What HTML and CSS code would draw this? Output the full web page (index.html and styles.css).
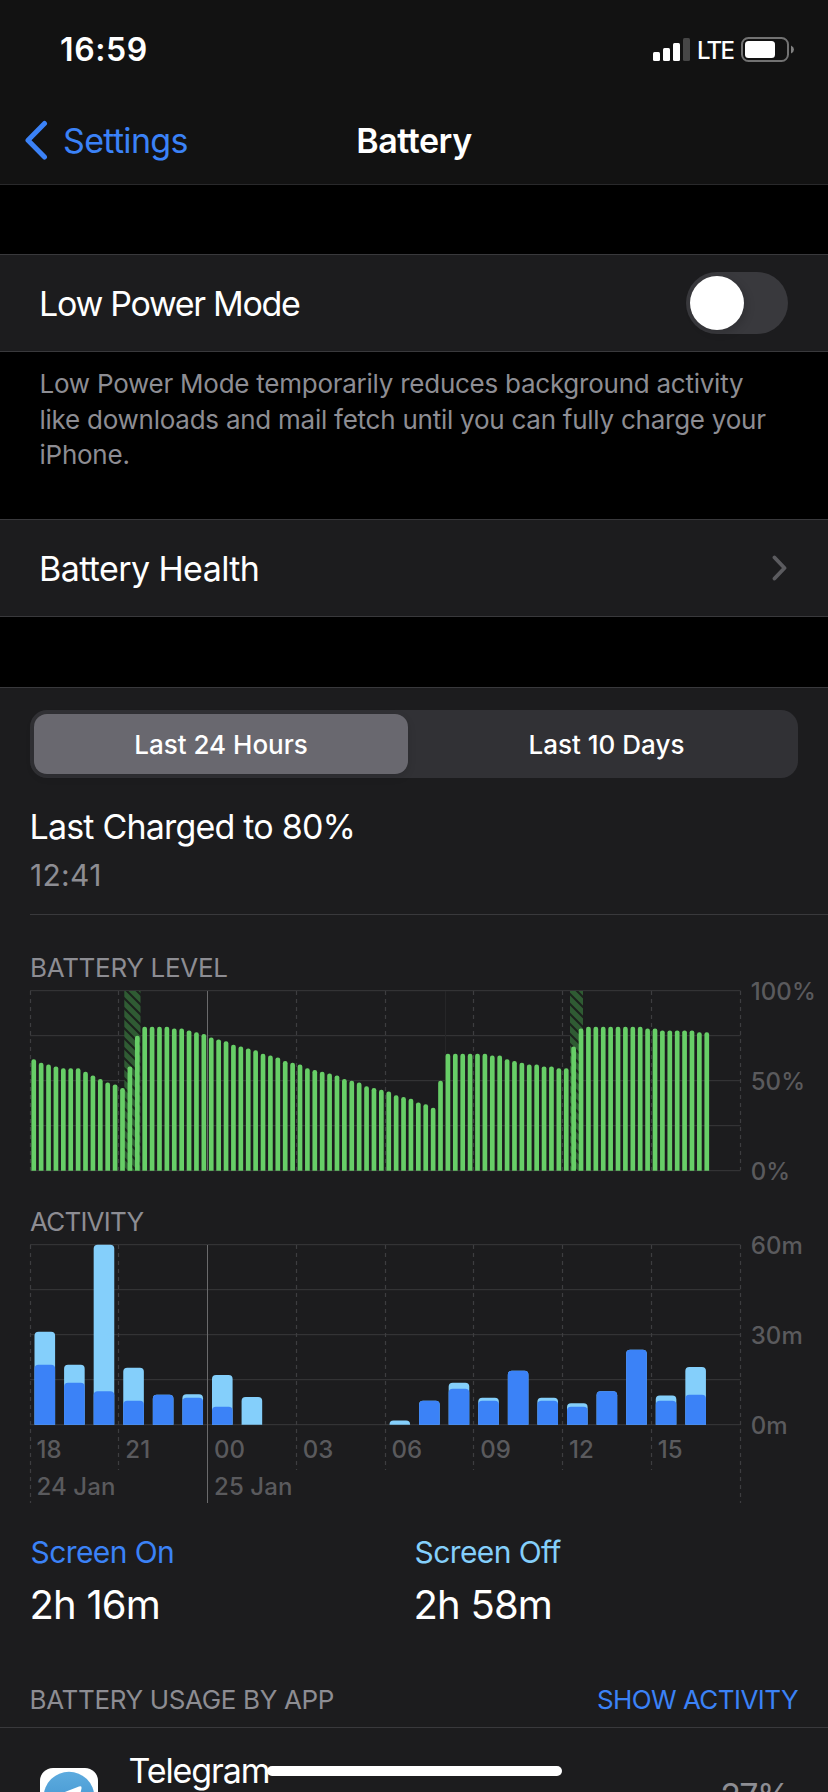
FILE: index.html
```html
<!DOCTYPE html>
<html lang="en">
<head>
    <meta charset="UTF-8">
    <meta name="viewport" content="width=device-width, initial-scale=1.0">
    <title>Battery</title>
    <link rel="stylesheet" href="styles.css">
</head>
<body>

<header class="header">
    <div class="status-bar">
        <span class="time">16:59</span>
        <div class="status-icons">
            <svg class="signal" width="37" height="24" viewBox="0 0 37 24">
                <rect x="0" y="14" width="7" height="9" rx="1.5" fill="#fff"/>
                <rect x="10" y="10" width="7" height="13" rx="1.5" fill="#fff"/>
                <rect x="20" y="5" width="7" height="18" rx="1.5" fill="#fff"/>
                <rect x="30" y="0" width="7" height="23" rx="1.5" fill="#464646"/>
            </svg>
            <span class="network">LTE</span>
            <svg class="battery-icon" width="53" height="25" viewBox="0 0 53 25">
                <rect x="1" y="1" width="46" height="23" rx="6.5" fill="none" stroke="#727272" stroke-width="2"/>
                <rect x="4" y="4" width="30" height="17" rx="3.5" fill="#fff"/>
                <path d="M50 8.5 Q53 10 53 12.5 Q53 15 50 16.5 Z" fill="#808080"/>
            </svg>
        </div>
    </div>
    <nav class="nav-bar">
        <a class="back">
            <svg width="24" height="40" viewBox="0 0 24 40">
                <path d="M20.5 3.5 L4 20.2 L20.5 37" fill="none" stroke="#3b82f7" stroke-width="5" stroke-linecap="round" stroke-linejoin="round"/>
            </svg>
            <span>Settings</span>
        </a>
        <h1>Battery</h1>
    </nav>
</header>

<main>
    <div class="row">
        <span class="row-label low-power">Low Power Mode</span>
        <div class="toggle"><div class="knob"></div></div>
    </div>
    <p class="footnote">Low Power Mode temporarily reduces background activity<br>like downloads and mail fetch until you can fully charge your<br>iPhone.</p>

    <div class="row">
        <span class="row-label">Battery Health</span>
        <svg class="chevron" width="16" height="28" viewBox="0 0 16 28">
            <path d="M2.5 3.5 L12.5 14 L2.5 24.5" fill="none" stroke="#5b5b5f" stroke-width="3.8" stroke-linecap="round" stroke-linejoin="round"/>
        </svg>
    </div>

    <section class="usage">
        <div class="segmented">
            <button class="segment active">Last 24 Hours</button>
            <button class="segment">Last 10 Days</button>
        </div>

        <div class="last-charged">
            <h2>Last Charged to 80%</h2>
            <p>12:41</p>
        </div>

        <h3 class="chart-title">BATTERY LEVEL</h3>
        <svg class="chart" id="levelChart" width="798" height="200" viewBox="0 0 798 200">
            <defs>
                <pattern id="hatch" width="10" height="10" patternUnits="userSpaceOnUse">
                    <rect width="10" height="10" fill="#2f5b33"/>
                    <path d="M-2 -2 L12 12 M-2 8 L2 12 M8 -2 L12 2" stroke="#1b221c" stroke-width="2.1"/>
                </pattern>
            </defs>
        </svg>

        <h3 class="chart-title activity-title">ACTIVITY</h3>
        <svg class="chart" id="activityChart" width="798" height="266" viewBox="0 0 798 266"></svg>

        <div class="totals">
            <div class="total">
                <h4 class="screen-on">Screen On</h4>
                <p>2h 16m</p>
            </div>
            <div class="total">
                <h4 class="screen-off">Screen Off</h4>
                <p>2h 58m</p>
            </div>
        </div>

        <div class="apps-header">
            <span class="apps-title">BATTERY USAGE BY APP</span>
            <a class="show-activity">SHOW ACTIVITY</a>
        </div>

        <div class="app">
            <svg class="app-icon" width="58" height="58" viewBox="0 0 58 58">
                <defs>
                    <linearGradient id="sky" x1="0" y1="0" x2="0" y2="1">
                        <stop offset="0" stop-color="#5dabdf"/>
                        <stop offset="1" stop-color="#3a8fcb"/>
                    </linearGradient>
                </defs>
                <rect width="58" height="58" rx="13" fill="#fff"/>
                <circle cx="29" cy="29" r="25.3" fill="url(#sky)"/>
                <path d="M12 29 L39 18.5 Q42 17.5 41.5 20.5 L37 41 L24 32 Z" fill="#fff"/>
            </svg>
            <span class="app-name">Telegram</span>
            <span class="app-percent">27%</span>
        </div>
    </section>
</main>

<div class="home-indicator"></div>

<script>
    const SVG_NS = 'http://www.w3.org/2000/svg';
    const PLOT_WIDTH = 710;
    const PLOT_HEIGHT = 180;

    // battery percentage, one value per quarter of an hour
    const levels = [
        62, 60, 59, 58, 57, 57, 57, 55, 53, 51, 49, 48,
        46, 58, 75, 80, 80, 80, 80, 79, 79, 78, 77, 76,
        74, 73, 72, 70, 69, 68, 67, 65, 64, 63, 61, 60,
        59, 57, 56, 55, 54, 53, 51, 50, 49, 47, 46, 45,
        44, 42, 41, 40, 38, 37, 35, 50, 65, 65, 65, 65,
        65, 65, 64, 64, 62, 61, 60, 59, 59, 58, 58, 57,
        57, 69, 79, 80, 80, 80, 80, 80, 80, 80, 80, 79,
        79, 78, 78, 78, 78, 78, 77, 77
    ];

    // minutes per hour: [total, screen on]
    const activity = [
        [31, 20], [20, 14], [60, 11.2], [19, 8], [10, 10], [10.2, 9],
        [16.6, 6], [9.3, 0], [0, 0], [0, 0], [0, 0], [0, 0],
        [1.4, 0], [8, 8], [14, 12], [9, 8], [18, 18], [9, 8],
        [7.2, 6], [11.2, 11.2], [25, 25], [9.8, 8], [19.3, 10]
    ];

    const hours = ['18', '21', '00', '03', '06', '09', '12', '15'];

    function add(svg, tag, attrs, text) {
        const el = document.createElementNS(SVG_NS, tag);
        for (const key in attrs) el.setAttribute(key, attrs[key]);
        if (text) el.textContent = text;
        svg.appendChild(el);
    }

    function drawGrid(svg, top, labels, bottomOf) {
        for (let i = 0; i <= 4; i++) {
            add(svg, 'rect', { class: 'grid', x: 0, y: top + i * 45, width: PLOT_WIDTH + 0.5, height: 1.2 });
        }
        for (let i = 0; i <= 8; i++) {
            const x = Math.round(i * PLOT_WIDTH / 8 - 0.4) + 0.5;
            add(svg, 'line', { class: i === 2 ? 'midnight' : 'tick', x1: x, x2: x, y1: top + 1, y2: bottomOf(i) });
        }
        labels.forEach((label, i) => {
            add(svg, 'text', { class: 'axis', x: 720.7, y: top + 9.5 + i * 90 }, label);
        });
    }

    // bar with only the two top corners rounded
    function drawBar(svg, className, x, width, base, height, radius) {
        if (height <= 0) return;
        const r = Math.min(radius, height);
        const y = base - height;
        add(svg, 'path', {
            class: className,
            d: `M${x} ${base} V${y + r} Q${x} ${y} ${x + r} ${y} H${x + width - r} Q${x + width} ${y} ${x + width} ${y + r} V${base} Z`
        });
    }

    const levelChart = document.getElementById('levelChart');
    drawGrid(levelChart, 6, ['100%', '50%', '0%'], () => 186);
    add(levelChart, 'rect', { class: 'charging', x: 94.3, y: 7, width: 16.2, height: PLOT_HEIGHT });
    add(levelChart, 'rect', { class: 'charging', x: 540, y: 7, width: 13, height: PLOT_HEIGHT });
    add(levelChart, 'line', { class: 'faint', x1: 415.5, x2: 415.5, y1: 7, y2: 186 });
    levels.forEach((value, i) => {
        drawBar(levelChart, 'level', 1.4 + i * PLOT_WIDTH / 96, 4.7, 186.8, value * 1.8, 2.2);
    });

    const activityChart = document.getElementById('activityChart');
    drawGrid(activityChart, 6, ['60m', '30m', '0m'], i => (i === 0 || i === 2 || i === 8) ? 265 : 232);
    activity.forEach(([total, on], i) => {
        const x = 4.5 + i * PLOT_WIDTH / 24;
        drawBar(activityChart, 'off', x, 20.6, 186.8, total * 3, 4);
        drawBar(activityChart, 'on', x, 20.6, 186.8, on * 3, 4);
    });
    hours.forEach((hour, i) => {
        add(activityChart, 'text', { class: 'axis', x: 6.5 + i * PLOT_WIDTH / 8, y: 220 }, hour);
    });
    add(activityChart, 'text', { class: 'axis', x: 6.5, y: 256.8 }, '24 Jan');
    add(activityChart, 'text', { class: 'axis', x: 184, y: 256.8 }, '25 Jan');
</script>

</body>
</html>
```
FILE: styles.css
```css
* {
    box-sizing: border-box;
    margin: 0;
    padding: 0;
}

body {
    width: 828px;
    height: 1792px;
    overflow: hidden;
    background: #000;
    color: #fff;
    font-family: Inter, 'Liberation Sans', sans-serif;
    font-size: 34px;
}

h1, h2, h3, h4 {
    font-weight: 400;
}

svg {
    display: block;
}

/* Header */

.header {
    height: 185px;
    background: #121212;
    border-bottom: 1px solid #29292b;
}

.status-bar {
    display: flex;
    justify-content: space-between;
    height: 96px;
    padding: 3px 34px 0 60px;
    align-items: center;
}

.time {
    font-size: 32px;
    font-weight: 600;
    letter-spacing: 0.6px;
}

.status-icons {
    display: flex;
    align-items: center;
}

.network {
    width: 51px;
    padding-left: 7px;
    font-size: 24px;
    font-weight: 500;
    letter-spacing: -1.7px;
    line-height: 30px;
    padding-top: 2px;
}

.nav-bar {
    display: grid;
    grid-template-columns: 1fr auto 1fr;
    align-items: center;
    height: 88px;
}

.back {
    display: flex;
    align-items: center;
    padding-left: 24px;
    gap: 15px;
    color: #3b82f7;
    letter-spacing: -0.68px;
}

.nav-bar h1 {
    font-size: 34px;
    font-weight: 600;
    letter-spacing: -0.45px;
}

/* Rows */

.row {
    display: flex;
    justify-content: space-between;
    align-items: center;
    height: 98px;
    padding: 0 40px 0 39px;
    background: #1c1c1e;
    border-top: 1px solid #39393c;
    border-bottom: 1px solid #39393c;
}

main {
    padding-top: 69px;
}

.row-label {
    letter-spacing: -0.6px;
}

.row-label.low-power {
    letter-spacing: -1.3px;
}

.toggle {
    width: 102px;
    height: 62px;
    padding: 4px;
    border-radius: 31px;
    background: #39393d;
}

.knob {
    width: 54px;
    height: 54px;
    border-radius: 50%;
    background: #fff;
    box-shadow: 3px 3px 8px rgba(0, 0, 0, 0.15);
}

.footnote {
    height: 167px;
    padding: 14px 0 0 39.5px;
    color: #8d8d93;
    font-size: 26px;
    line-height: 35.5px;
    letter-spacing: -0.25px;
    white-space: nowrap;
}

/* Usage */

.usage {
    margin-top: 70px;
    padding-top: 22px;
    background: #1c1c1e;
    border-top: 1px solid #39393c;
}

.segmented {
    display: flex;
    height: 68px;
    margin: 0 30px;
    padding: 4px;
    border-radius: 17px;
    background: #313135;
}

.segment {
    flex: 1;
    padding-left: 11px;
    border: none;
    border-radius: 13px;
    background: none;
    color: #fff;
    font-family: inherit;
    font-size: 26px;
    font-weight: 500;
}

.segment.active {
    flex: none;
    width: 374px;
    padding-left: 0;
    background: #69686f;
    box-shadow: 0 3px 8px rgba(0, 0, 0, 0.12);
}

.last-charged {
    height: 137px;
    margin-left: 30px;
    padding-top: 28px;
    border-bottom: 1px solid #39393c;
}

.last-charged h2 {
    margin-left: -0.5px;
    font-size: 34px;
    line-height: 42px;
    letter-spacing: -0.8px;
}

.last-charged p {
    margin-top: 9px;
    color: #8d8d93;
    font-size: 30px;
    line-height: 36px;
    letter-spacing: 0.3px;
}

.chart-title {
    margin: 37px 0 0 30px;
    color: #8d8d93;
    font-size: 26px;
    line-height: 32px;
    letter-spacing: -0.3px;
}

.activity-title {
    margin: 22px 0 0 30px;
    letter-spacing: -0.8px;
}

.chart {
    margin-left: 30px;
    overflow: visible;
}

.grid {
    fill: #333335;
}

.tick {
    stroke: #3d3d40;
    stroke-width: 1.2;
    stroke-dasharray: 4 4;
}

.midnight {
    stroke: #6a6a6c;
}

.faint {
    stroke: #262628;
}

.axis {
    fill: #5a5a5d;
    font-size: 24px;
    font-weight: 500;
    letter-spacing: 0.1px;
}

.charging {
    fill: url(#hatch);
}

.level {
    fill: #67ce67;
}

.on {
    fill: #3b82f7;
}

.off {
    fill: #84cffb;
}

.totals {
    display: grid;
    grid-template-columns: 384px 1fr;
    margin: 30px 0 0 30.5px;
}

.total h4 {
    font-size: 30px;
    line-height: 36px;
    letter-spacing: -0.6px;
}

.total p {
    margin-top: 11px;
    margin-left: -1px;
    font-size: 40px;
    line-height: 48px;
    letter-spacing: -0.8px;
}

.screen-on {
    color: #3b82f7;
}

.screen-off {
    color: #84cffb;
}

.apps-header {
    display: flex;
    justify-content: space-between;
    height: 99px;
    padding: 55px 30px 0 29.5px;
    border-bottom: 1px solid #39393c;
    font-size: 26px;
    line-height: 32px;
}

.apps-title {
    color: #8d8d93;
    letter-spacing: -0.35px;
}

.show-activity {
    color: #3b82f7;
    letter-spacing: -0.57px;
}

.app {
    display: flex;
    align-items: flex-start;
    height: 120px;
    padding: 0 39px 0 40px;
    line-height: 42px;
}

.app-icon {
    margin-top: 40px;
}

.app-name {
    margin: 22px auto 0 30.5px;
    letter-spacing: -1.1px;
}

.app-percent {
    margin-top: 47px;
    color: #8d8d93;
    letter-spacing: -1.5px;
}

/* Lies over the list */
.home-indicator {
    position: absolute;
    top: 1766px;
    left: 267px;
    width: 295px;
    height: 10px;
    border-radius: 5px;
    background: #fff;
}
```
